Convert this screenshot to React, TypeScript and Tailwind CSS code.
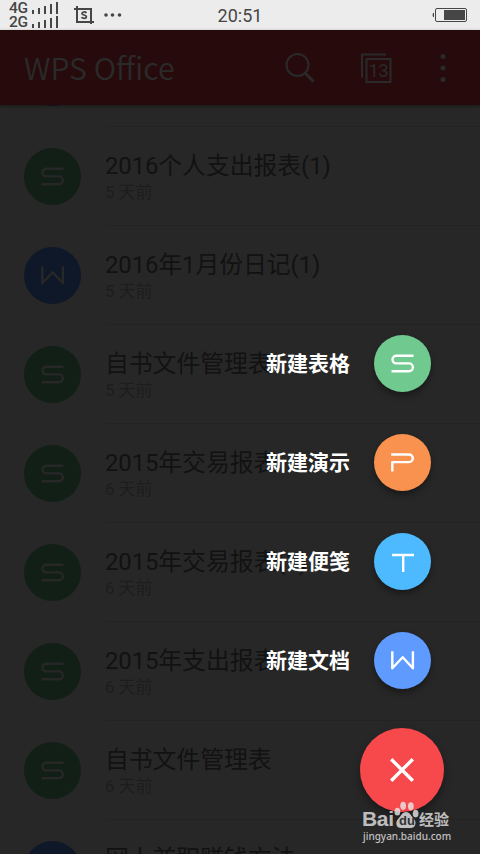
type Kind = "sheet" | "slide" | "note" | "doc";

const glyphs: Record<Kind, string> = {
  sheet: "M39.5 20.8H22.3a3.8 3.8 0 0 0 0 7.6H35a3.9 3.9 0 0 1 0 7.8H17.5",
  slide: "M17.2 20.5H35a3.8 3.8 0 0 1 0 7.6H18.3V37.4",
  note: "M18 22H40M29.2 22V39",
  doc: "M18.3 19.2V36.3L28.7 25.2L38.9 36.3V19.2"
};

const files: { title: string; date: string; kind: Kind }[] = [
  { title: "", date: "", kind: "doc" },
  { title: "2016个人支出报表(1)", date: "5 天前", kind: "sheet" },
  { title: "2016年1月份日记(1)", date: "5 天前", kind: "doc" },
  { title: "自书文件管理表", date: "5 天前", kind: "sheet" },
  { title: "2015年交易报表", date: "6 天前", kind: "sheet" },
  { title: "2015年交易报表(1)", date: "6 天前", kind: "sheet" },
  { title: "2015年支出报表", date: "6 天前", kind: "sheet" },
  { title: "自书文件管理表", date: "6 天前", kind: "sheet" },
  { title: "网上兼职赚钱方法", date: "6 天前", kind: "doc" }
];

const actions: { label: string; kind: Kind; color: string }[] = [
  { label: "新建表格", kind: "sheet", color: "bg-[#70c98f]" },
  { label: "新建演示", kind: "slide", color: "bg-[#f9914f]" },
  { label: "新建便笺", kind: "note", color: "bg-[#4dbaff]" },
  { label: "新建文档", kind: "doc", color: "bg-[#5f9aff]" }
];

const Glyph = ({ kind }: { kind: Kind }) => (
  <svg
    viewBox="0 0 57 57"
    className="size-full"
    fill="none"
    stroke="currentColor"
    strokeWidth="2.4"
    strokeLinejoin="round"
  >
    <path d={glyphs[kind]} />
  </svg>
);

const Signal = ({ name }: { name: string }) => (
  <div className="flex items-end h-[14px]">
    <span className="w-[23px] text-[15.5px] leading-[11px] font-medium tracking-[-0.3px]">
      {name}
    </span>
    <svg width="27" height="14" viewBox="0 0 27 14" fill="currentColor">
      <path d="M0 10h2v4H0zM6 8h2v6H6zM12 6h2v8h-2zM18 4h2v10h-2zM24 2h2v12h-2z" />
    </svg>
  </div>
);

const StatusBar = () => (
  <div className="relative flex items-center h-[30px] bg-[#ececec] text-[#464646]">
    <div className="ml-[9px] self-start flex flex-col">
      <Signal name="4G" />
      <Signal name="2G" />
    </div>
    <svg
      width="20"
      height="20"
      viewBox="0 0 20 20"
      className="ml-[15px]"
      fill="none"
      stroke="currentColor"
      strokeWidth="2"
    >
      <path d="M0 4H17V19M3 1V17H20" />
      <path
        d="M12.4 8C11.6 6.600 8 6.500 8 8.500S12.400 9.600 12.400 11.800S8.400 13.900 7.500 12.200"
        strokeWidth="1.7"
      />
    </svg>
    <svg width="18" height="4" viewBox="0 0 18 4" className="ml-[10px]" fill="currentColor">
      <circle cx="2" cy="2" r="1.8" />
      <circle cx="8.500" cy="2" r="1.8" />
      <circle cx="15.500" cy="2" r="1.8" />
    </svg>
    <span className="absolute inset-x-0 text-center text-[18px] leading-[31px]">20:51</span>
    <svg width="36" height="14" viewBox="0 0 36 14" className="ml-auto mr-[12px]">
      <path d="M2 4.500v5c-2-1-2-4 0-5z" fill="currentColor" />
      <rect x="3.500" y="0.500" width="31" height="13" rx="1.500" fill="none" stroke="currentColor" />
      <rect x="12" y="2" width="21" height="10" fill="currentColor" />
    </svg>
  </div>
);

const Header = () => (
  <header className="relative z-10 flex items-center h-[75px] bg-[#270a0c] text-[#2a2a2a] shadow-[0_1px_3px_rgba(0,0,0,0.4)]">
    <h1 className="ml-[24px] mb-px font-['Noto_Sans_CJK_SC','Noto_Sans',sans-serif] text-[30.3px] leading-[48px] font-[350] whitespace-nowrap">
      WPS Office
    </h1>
    <svg
      width="30"
      height="30"
      viewBox="0 0 30 30"
      className="ml-auto"
      fill="none"
      stroke="currentColor"
      strokeWidth="2"
    >
      <circle cx="12.500" cy="12" r="11" />
      <path d="M20 20L28.500 28.500" strokeWidth="3" />
    </svg>
    <div className="relative ml-[46px] w-[31px] h-[30px]">
      <svg width="31" height="30" viewBox="0 0 31 30" fill="none" stroke="currentColor" strokeWidth="2">
        <path d="M1 24.500V1.500H25" />
        <rect x="5.500" y="6" width="24" height="23" />
      </svg>
      <span className="absolute left-[7.5px] top-[7px] text-[18.5px] leading-[22px] tracking-[-0.7px]">
        13
      </span>
    </div>
    <svg width="6" height="30" viewBox="0 0 6 30" className="ml-[48px] mr-[34px]" fill="currentColor">
      <circle cx="3" cy="3.500" r="2.500" />
      <circle cx="3" cy="15" r="2.500" />
      <circle cx="3" cy="26.500" r="2.500" />
    </svg>
  </header>
);

const FileList = () => (
  <ul className="h-[749px] overflow-hidden">
    {files.map((file, index) => (
      <li key={index} className="flex h-[99px] pl-[24px] first:-mt-[78px]">
        <div
          className={
            file.kind === "doc"
              ? "size-[57px] mt-[22px] rounded-full bg-[#0f1828] text-[#272727]"
              : "size-[57px] mt-[22px] rounded-full bg-[#121f17] text-[#272727]"
          }
        >
          <Glyph kind={file.kind} />
        </div>
        <div className="ml-[24px] flex-1 border-t border-[#232323] pt-[23px] whitespace-nowrap">
          <p className="text-[23.9px] leading-[32px] tracking-[-0.1px] text-[#121212]">
            {file.title}
          </p>
          <p className="-mt-px text-[16.8px] leading-[22px] text-[#1d1d1d]">{file.date}</p>
        </div>
      </li>
    ))}
  </ul>
);

const Watermark = () => (
  <div className="absolute left-[362px] top-[801px] w-[92px] text-[#e8e8e8]/80">
    <div className="relative flex h-[29px] items-end font-['Liberation_Sans','Noto_Sans_CJK_SC',sans-serif] font-bold">
      <span className="w-[32px] text-[21px] leading-[22px] tracking-[-0.3px]">Bai</span>
      <svg width="25" height="28" viewBox="0 0 26 29" className="mb-px" fill="currentColor">
        <ellipse cx="3.500" cy="11" rx="3" ry="4" />
        <ellipse cx="9.500" cy="5" rx="3" ry="4.200" />
        <ellipse cx="17.500" cy="5.500" rx="3" ry="4.200" />
        <ellipse cx="22.500" cy="13" rx="3" ry="4" />
        <path d="M12.500 11.500c4 0 5 4 8 7c3.500 3.500 2 9.500-3 9.500H7c-5 0-6-6-2.500-9.500c3-3 4-7 8-7z" />
      </svg>
      <span className="absolute left-[37px] top-[12px] text-[13px] leading-[15px] text-[#333]">
        du
      </span>
      <span className="text-[15px] leading-[20px]">经验</span>
    </div>
    <p className="ml-px mt-px font-['Noto_Sans',sans-serif] text-[10px] leading-[11px] font-medium">
      jingyan.baidu.com
    </p>
  </div>
);

export default function App() {
  return (
    <div className="relative w-[480px] h-[854px] overflow-hidden bg-[#272727] font-['Roboto','Noto_Sans_CJK_SC',sans-serif]">
      <StatusBar />
      <Header />
      <FileList />

      {/* speed dial over the list */}
      <div className="absolute right-[36px] top-[335px] z-20 flex flex-col items-end">
        {actions.map((action) => (
          <div key={action.label} className="mr-[13px] flex h-[99px] items-start">
            <span className="mr-[24px] text-[21px] leading-[59px] font-bold text-white">
              {action.label}
            </span>
            <div
              className={`size-[57px] rounded-full text-white shadow-[0_4px_6px_rgba(0,0,0,0.35)] ${action.color}`}
            >
              <Glyph kind={action.kind} />
            </div>
          </div>
        ))}
        <button className="-mt-[3px] flex size-[84px] items-center justify-center rounded-full bg-[#f7484c] text-white shadow-[0_5px_8px_rgba(0,0,0,0.35)]">
          <svg width="24" height="24" viewBox="0 0 24 24" stroke="currentColor" strokeWidth="3.4">
            <path d="M1.200 1.200L22.800 22.800M22.800 1.200L1.200 22.800" />
          </svg>
        </button>
      </div>

      <div className="absolute inset-0 z-30 pointer-events-none">
        <Watermark />
      </div>
    </div>
  );
}
